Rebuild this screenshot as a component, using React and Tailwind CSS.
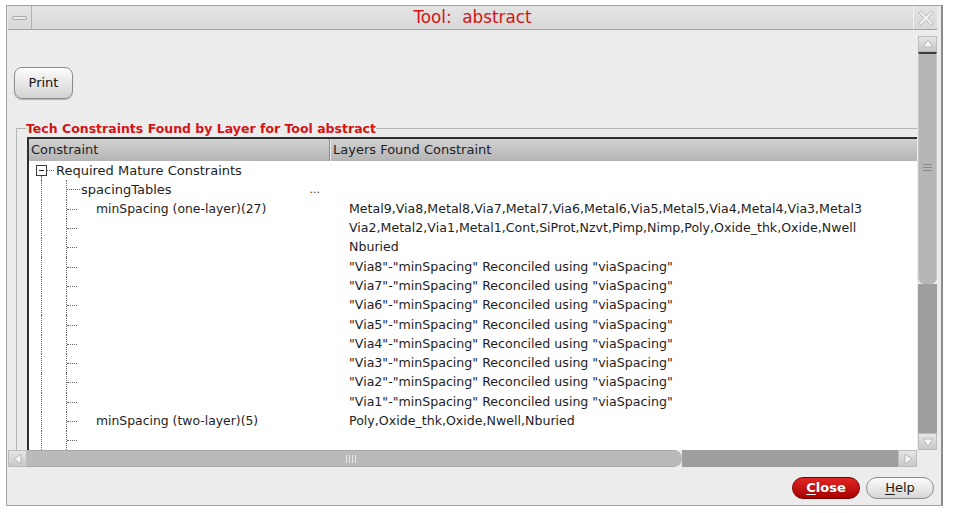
import React from "react";

const font = { fontFamily: '"DejaVu Sans", sans-serif' };

const rows = [
  { level: 0, left: "Required Mature Constraints", right: "" },
  { level: 1, left: "spacingTables", right: "", dots: true },
  { level: 2, left: "minSpacing (one-layer)(27)", right: "Metal9,Via8,Metal8,Via7,Metal7,Via6,Metal6,Via5,Metal5,Via4,Metal4,Via3,Metal3" },
  { level: 2, left: "", right: "Via2,Metal2,Via1,Metal1,Cont,SiProt,Nzvt,Pimp,Nimp,Poly,Oxide_thk,Oxide,Nwell" },
  { level: 2, left: "", right: "Nburied" },
  { level: 2, left: "", right: '"Via8"-"minSpacing" Reconciled using "viaSpacing"' },
  { level: 2, left: "", right: '"Via7"-"minSpacing" Reconciled using "viaSpacing"' },
  { level: 2, left: "", right: '"Via6"-"minSpacing" Reconciled using "viaSpacing"' },
  { level: 2, left: "", right: '"Via5"-"minSpacing" Reconciled using "viaSpacing"' },
  { level: 2, left: "", right: '"Via4"-"minSpacing" Reconciled using "viaSpacing"' },
  { level: 2, left: "", right: '"Via3"-"minSpacing" Reconciled using "viaSpacing"' },
  { level: 2, left: "", right: '"Via2"-"minSpacing" Reconciled using "viaSpacing"' },
  { level: 2, left: "", right: '"Via1"-"minSpacing" Reconciled using "viaSpacing"' },
  { level: 2, left: "minSpacing (two-layer)(5)", right: "Poly,Oxide_thk,Oxide,Nwell,Nburied" },
  { level: 2, left: "", right: "" },
];

const TreeRow = ({ row }) => {
  if (row.level === 0) {
    return (
      <div className="flex h-[19.3px] items-center">
        <div className="flex w-[300px] h-full items-center">
          <div className="ml-[7px] w-[11px] h-full flex flex-col items-center">
            <div className="flex-1" />
            <div className="w-[11px] h-[11px] border border-[#3a3a3a] bg-white flex items-center justify-center">
              <div className="w-[5px] h-px bg-[#222]" />
            </div>
            <div className="flex-1 w-0 border-l border-dotted border-[#666]" />
          </div>
          <div className="w-[7px] border-t border-dotted border-[#666]" />
          <span className="ml-[2px] text-[13px] text-[#1e1e1e] whitespace-pre">{row.left}</span>
        </div>
      </div>
    );
  }
  return (
    <div className="flex h-[19.3px] items-center">
      <div className="flex w-[300px] h-full items-center">
        <div className="w-[12px]" />
        <div className="w-[25px] h-full border-l border-dotted border-[#666]" />
        <div className="h-full border-l border-dotted border-[#666] flex items-center">
          <div className={row.level === 1 ? "w-[13px] border-t border-dotted border-[#666]" : "w-[10px] border-t border-dotted border-[#666]"} />
        </div>
        <span
          className={
            row.level === 1
              ? "ml-[1px] text-[13px] text-[#1e1e1e] whitespace-pre"
              : "ml-[19px] text-[12.4px] text-[#1e1e1e] whitespace-pre"
          }
        >
          {row.left}
        </span>
        {row.dots && <span className="ml-auto mr-[9px] text-[11px] text-[#333]">...</span>}
      </div>
      <div className="pl-[20px] text-[12.6px] text-[#1e1e1e] whitespace-pre">{row.right}</div>
    </div>
  );
};

const Arrow = ({ dir }) => {
  const pts = {
    up: "3,11 8,4 13,11",
    down: "3,5 8,12 13,5",
    left: "11,3 4,8 11,13",
    right: "5,3 12,8 5,13",
  }[dir];
  return (
    <svg width="16" height="16" viewBox="0 0 16 16">
      <polygon points={pts} fill="#f4f4f4" stroke="#b8b8b8" strokeWidth="1" />
    </svg>
  );
};

export default function App() {
  return (
    <div className="w-[963px] h-[513px] bg-white overflow-hidden" style={font}>
      <div className="ml-[6px] mt-[5px] w-[937px] h-[501px] border border-r-2 border-[#a2a2a2] border-r-[#8c8c8c] bg-[#ececec] flex flex-col">
        {/* title bar */}
        <div className="ml-[1px] w-[929px] h-[24px] flex bg-gradient-to-b from-[#e4e4e4] to-[#d8d8d8] border-b border-[#a4a4a4]">
          <div className="w-[24px] h-full border-r border-[#b0b0b0] flex items-center justify-center">
            <div className="w-[15px] h-[4px] rounded-[2px] border border-[#a8a8a8] bg-[#ededed]" />
          </div>
          <div className="flex-1 flex items-center justify-center text-[16.8px] text-[#d41414] whitespace-pre">
            Tool:  abstract
          </div>
          <div className="w-[24px] h-full border-l border-[#f4f4f4] flex items-center justify-center">
            <svg width="16" height="16" viewBox="0 0 16 16">
              <path d="M3 3 L13 13 M13 3 L3 13" stroke="#c2c2c2" strokeWidth="4" strokeLinecap="square" />
              <path d="M3 3 L13 13 M13 3 L3 13" stroke="#f2f2f2" strokeWidth="2" strokeLinecap="square" />
            </svg>
          </div>
        </div>

        {/* scroll area + vertical scrollbar */}
        <div className="flex h-[420px] pl-[1px]">
          <div className="w-[909px] h-full overflow-hidden">
            <button className="ml-[6px] mt-[37px] w-[59px] h-[32px] rounded-[8px] border border-[#8e8e8e] bg-gradient-to-b from-[#fdfdfd] to-[#d2d2d2] shadow-[0_1px_1px_rgba(0,0,0,0.25)] text-[13px] text-[#111]">
              Print
            </button>
            <fieldset className="ml-[8px] mt-[22px] w-[940px] border border-[#b4b4b4] pl-[10px] pt-[1px] min-w-0">
              <legend className="ml-[-1px] px-0 text-[12.5px] leading-[15px] font-bold text-[#d41414] whitespace-pre">
                Tech Constraints Found by Layer for Tool abstract
              </legend>
              <div className="w-[920px] border-t-2 border-l-2 border-[#2e2e2e] bg-white">
                <div className="flex h-[22px] bg-gradient-to-b from-[#d2d2d2] to-[#b4b4b4] text-[13px] text-[#1e1e1e]">
                  <div className="w-[300px] pl-[2px] flex items-center">Constraint</div>
                  <div className="flex-1 pl-[3px] flex items-center border-l border-[#8e8e8e] shadow-[inset_1px_0_0_#e8e8e8]">
                    Layers Found Constraint
                  </div>
                </div>
                {rows.map((row, i) => (
                  <TreeRow key={i} row={row} />
                ))}
              </div>
            </fieldset>
          </div>
          <div className="ml-[1px] w-[19px] h-full pt-[6px] flex flex-col">
            <div className="h-[16px] bg-gradient-to-b from-[#e6e6e6] to-[#c8c8c8] border border-[#bcbcbc] flex items-center justify-center">
              <Arrow dir="up" />
            </div>
            <div className="h-[232px] bg-[#b6b6b6] border-t-2 border-[#3c3c3c] rounded-b-[6px] border-x border-x-[#c6c6c6] flex flex-col items-center pt-[110px]">
              <div className="w-[9px] h-px bg-[#8a8a8a]" />
              <div className="w-[9px] h-px bg-[#8a8a8a] mt-[2px]" />
              <div className="w-[9px] h-px bg-[#8a8a8a] mt-[2px]" />
            </div>
            <div className="h-[149px] bg-[#9e9e9e]" />
            <div className="h-[17px] bg-gradient-to-b from-[#e6e6e6] to-[#c8c8c8] border border-[#bcbcbc] flex items-center justify-center">
              <Arrow dir="down" />
            </div>
          </div>
        </div>

        {/* horizontal scrollbar */}
        <div className="flex h-[17px] pl-[1px]">
          <div className="w-[909px] flex">
            <div className="w-[19px] bg-gradient-to-b from-[#e6e6e6] to-[#c8c8c8] border border-[#bcbcbc] flex items-center justify-center">
              <Arrow dir="left" />
            </div>
            <div className="w-[655px] bg-[#bababa] border-y border-[#a8a8a8] rounded-r-full flex items-center pl-[319px]">
              <div className="flex gap-[2px]">
                <div className="w-px h-[8px] bg-[#e6e6e6]" />
                <div className="w-px h-[8px] bg-[#e6e6e6]" />
                <div className="w-px h-[8px] bg-[#e6e6e6]" />
                <div className="w-px h-[8px] bg-[#e6e6e6]" />
              </div>
            </div>
            <div className="flex-1 bg-[#9e9e9e]" />
            <div className="w-[19px] bg-gradient-to-b from-[#e6e6e6] to-[#c8c8c8] border border-[#bcbcbc] flex items-center justify-center">
              <Arrow dir="right" />
            </div>
          </div>
        </div>

        {/* footer */}
        <div className="flex-1 flex justify-end items-start pt-[10px] pr-[7px] gap-[6px]">
          <button className="w-[68px] h-[22px] rounded-full border border-[#7a0000] bg-gradient-to-b from-[#e02424] to-[#a80000] text-[13px] font-bold text-white">
            <span className="underline underline-offset-2">C</span>lose
          </button>
          <button className="w-[68px] h-[22px] rounded-full border border-[#8c8c8c] bg-gradient-to-b from-[#fbfbfb] to-[#d6d6d6] text-[13px] text-[#1a1a1a]">
            <span className="underline underline-offset-2">H</span>elp
          </button>
        </div>
      </div>
    </div>
  );
}
